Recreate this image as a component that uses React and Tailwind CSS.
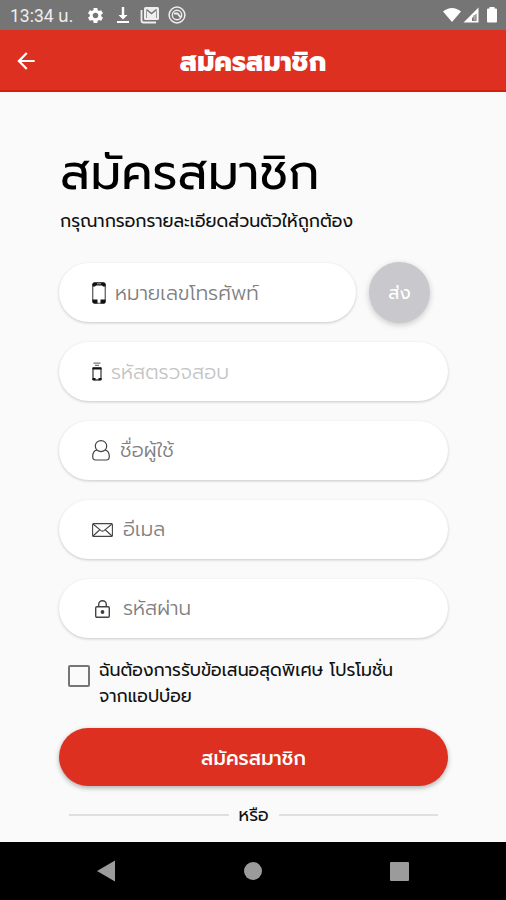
import { MdSettings, MdArrowBack } from 'react-icons/md'

const RED = 'bg-[#de3021]'

function PhoneIcon() {
  return (
    <svg width="14" height="22" viewBox="0 0 14 22" fill="none">
      <rect x="0.75" y="0.75" width="12.5" height="20.5" rx="2" stroke="#555" strokeWidth="1.2" />
      <path d="M2.5 0.5h9a2 2 0 0 1 2 2V4.5h-2.5l-1-1H4l-1 1H0.5v-2a2 2 0 0 1 2-2z" fill="#111" />
      <path d="M0.5 17.5h5v4h-3a2 2 0 0 1-2-2zM13.5 17.5h-5v4h3a2 2 0 0 0 2-2z" fill="#111" />
      <path d="M5 1.8h4" stroke="#aaa" />
    </svg>
  )
}

function CodeIcon() {
  return (
    <svg width="10" height="19" viewBox="0 0 10 19" fill="none">
      <path d="M1.5 1.2h7M3 3.4h4" stroke="#777" strokeWidth="1.2" />
      <rect x="1" y="6" width="8" height="12" rx="0.5" stroke="#444" strokeWidth="1.3" />
      <path d="M0.5 6.500h9M0.5 17h3M6.5 17h3" stroke="#111" strokeWidth="2" />
    </svg>
  )
}

function UserIcon() {
  return (
    <svg width="18" height="21" viewBox="0 0 18 21" fill="none" stroke="#444" strokeWidth="1.2">
      <path d="M4.800 10C3.700 8.900 3.300 7.500 3.300 6a5.700 5.400 0 0 1 11.400 0c0 1.500-.4 2.900-1.500 4" />
      <path d="M4.800 10C2 10.700.7 13 .7 16.500c0 2.500 1.300 3.500 3 3.500h10.600c1.700 0 3-1 3-3.500 0-3.500-1.300-5.800-4.100-6.500-2.600 2-5.800 2-8.400 0z" />
    </svg>
  )
}

function MailIcon() {
  return (
    <svg width="21" height="14" viewBox="0 0 21 14" fill="none" stroke="#444" strokeWidth="1.1">
      <rect x="0.6" y="0.6" width="19.8" height="12.8" rx="1" />
      <path d="M1 1l8 6.6q1.5 1 3 0L20 1M1 13l6.500-6M20 13l-6.500-6" />
    </svg>
  )
}

function LockIcon() {
  return (
    <svg width="15" height="18" viewBox="0 0 15 18" fill="none" stroke="#444" strokeWidth="1.4">
      <rect x="0.7" y="6.7" width="13.6" height="10.6" rx="1.2" />
      <path d="M3.700 6.500V4.500a3.800 3.800 0 0 1 7.600 0v2" />
      <circle cx="7.5" cy="12" r="1.2" fill="#222" />
    </svg>
  )
}

const FIELDS = [
  { label: 'รหัสตรวจสอบ', icon: CodeIcon, pad: 'pl-[33px] gap-2', text: 'text-[#c4c4c4]' },
  { label: 'ชื่อผู้ใช้', icon: UserIcon, pad: 'pl-[33px] gap-[9px]', text: 'text-[#808080] pb-[2px]' },
  { label: 'อีเมล', icon: MailIcon, pad: 'pl-[33px] gap-[9px]', text: 'text-[#808080] pb-[2px]' },
  { label: 'รหัสผ่าน', icon: LockIcon, pad: 'pl-[36px] gap-3', text: 'text-[#808080] pb-[2px]' },
]

function StatusBar() {
  return (
    <div className="flex h-[30px] shrink-0 items-center bg-[#757575] pl-[10px] pr-2 text-white">
      <span className="w-[75px] whitespace-nowrap pt-[2px] font-['Roboto','Noto_Sans_Thai',sans-serif] text-[17.5px] text-[#eee]">13:34 น.</span>
      <MdSettings className="ml-[1px] size-[19px]" />
      <svg className="ml-[11px]" width="14" height="18" viewBox="0 0 14 18" fill="#fff">
        <path d="M5.800 1h2.400v8h3.300L7 13.500 2.500 9h3.300zM1 15h12v2H1z" />
      </svg>
      <svg className="ml-[10px]" width="20" height="18" viewBox="0 0 20 18" fill="none">
        <path d="M1.500 4v10.500a2 2 0 0 0 2 2H16" stroke="#eee" strokeWidth="1.8" />
        <rect x="4" y="1" width="15" height="13" rx="1.5" fill="#eee" />
        <path d="M6.500 12V4.500M16.500 12V4.500" stroke="#999" />
        <path d="M6.500 3.500l5 4 5-4" stroke="#757575" strokeWidth="1.6" />
      </svg>
      <svg className="ml-[8px]" width="18" height="18" viewBox="0 0 18 18" fill="none" stroke="#eee">
        <circle cx="9" cy="9" r="7.900" strokeWidth="1.500" />
        <circle cx="9" cy="9" r="4.700" strokeWidth="1.400" />
        <path d="M6 7.500h3.500l3.300 4" strokeWidth="1.900" />
      </svg>
      <svg className="ml-auto" width="55" height="18" viewBox="0 0 55 18" fill="#fff">
        <path d="M0 5.500C5.500.7 12.500.7 18 5.500L9 16z" />
        <path d="M35.500 1.500v15H20.500z M33.500 7.500L29 12v3h4.500z" fillRule="evenodd" />
        <path d="M30.500 9h2.200v5.500h-2.200z" fill="#aaa" />
        <path d="M46.500 1h5v1.500h1.500a1 1 0 0 1 1 1v12a1 1 0 0 1-1 1h-8a1 1 0 0 1-1-1v-12a1 1 0 0 1 1-1h1.500z" />
      </svg>
    </div>
  )
}

function Field({ label, icon: Icon, pad, text }) {
  return (
    <div className={`flex h-[59px] items-center rounded-full bg-white shadow-[0_1px_3px_rgba(0,0,0,0.2)] ${pad}`}>
      <Icon />
      <span className={`whitespace-nowrap pl-px text-[20px] font-light ${text}`}>{label}</span>
    </div>
  )
}

export default function App() {
  return (
    <div className="flex h-[900px] w-[506px] flex-col overflow-hidden bg-[#fafafa] font-['Prompt','Kanit','Noto_Sans_Thai','Noto_Sans',sans-serif] text-[#111]">
      <StatusBar />
      <header className={`grid h-[62px] shrink-0 grid-cols-[52px_1fr_52px] items-center border-b-2 border-[#d51d10] text-white ${RED}`}>
        <MdArrowBack className="ml-[13px] mt-[2px] size-[26px]" />
        <span className="whitespace-nowrap pt-[6px] text-center text-[26.5px] font-extrabold">สมัครสมาชิก</span>
      </header>

      <main className="flex h-[750px] shrink-0 flex-col pl-[59px] pr-[58px]">
        <h1 className="mt-[51px] h-[60px] whitespace-nowrap pl-px text-[49px] leading-[60px] text-black">สมัครสมาชิก</h1>
        <p className="mt-[5px] h-[27px] whitespace-nowrap pl-px text-[17.4px] leading-[27px]">กรุณากรอกรายละเอียดส่วนตัวให้ถูกต้อง</p>

        <div className="mt-[28px] flex items-center gap-[13px]">
          <div className="w-[297px]">
            <Field label="หมายเลขโทรศัพท์" icon={PhoneIcon} pad="pl-[33px] gap-2" text="text-[#808080]" />
          </div>
          <button className="-my-px size-[61px] rounded-full bg-[#c9c8cd] pt-[2px] text-[18px] text-white shadow-[0_2px_6px_rgba(0,0,0,0.2)]">ส่ง</button>
        </div>

        <div className="mt-5 flex flex-col gap-5">
          {FIELDS.map((f) => (
            <Field key={f.label} {...f} />
          ))}
        </div>

        <label className="mt-[18px] flex h-[52px] pl-[9px]">
          <span className="mt-[9px] size-[22px] shrink-0 rounded-[2px] border-2 border-[#757575]" />
          <span className="ml-[9px] whitespace-nowrap pt-px text-[17.4px] leading-[26px]">
            ฉันต้องการรับข้อเสนอสุดพิเศษ โปรโมชั่น
            <br />
            จากแอปบ๋อย
          </span>
        </label>

        <button className={`mt-5 h-[58px] shrink-0 rounded-full pt-[3px] text-[19.5px] font-medium text-white shadow-[0_2px_5px_rgba(0,0,0,0.3)] ${RED}`}>
          สมัครสมาชิก
        </button>

        <div className="mt-[16px] flex items-center gap-[10px] px-[10px]">
          <div className="h-[2px] flex-1 bg-[#dfdfdf]" />
          <span className="h-[26px] w-[30px] text-center text-[17.4px] leading-[26px]">หรือ</span>
          <div className="h-[2px] flex-1 bg-[#dfdfdf]" />
        </div>
      </main>

      <nav className="flex h-[58px] shrink-0 items-center justify-between bg-black px-[97px]">
        <svg width="18" height="22" viewBox="0 0 18 22" fill="#9b9b9b">
          <path d="M18 0.5v21L0 11z" />
        </svg>
        <div className="size-[18px] rounded-full bg-[#9b9b9b]" />
        <div className="size-[19px] rounded-[1px] bg-[#9b9b9b]" />
      </nav>
    </div>
  )
}
